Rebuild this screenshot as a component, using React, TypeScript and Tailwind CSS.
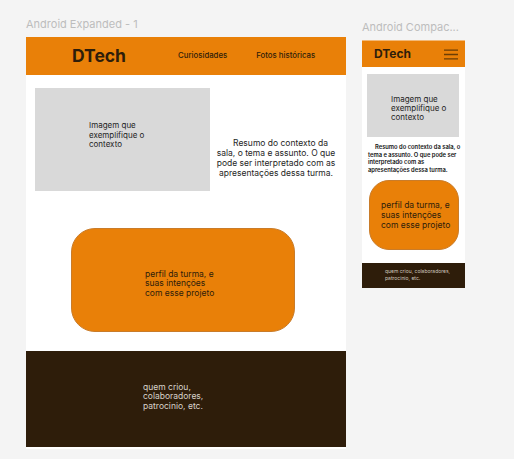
import React from 'react';

const font = { fontFamily: 'Inter, "Noto Sans", sans-serif' };

function ExpandedFrame() {
  return (
    <div className="flex flex-col">
      <p className="h-[12px] text-[11px] leading-[12px] text-[#bdbdbd] mb-[7px]">Android Expanded - 1</p>
      <div className="w-[320px] h-[412px] bg-white flex flex-col">
        <header className="h-[38px] bg-[#e98008] flex items-center pl-[46px] text-[#2e1d0a]">
          <h1 className="text-[17.5px] font-bold leading-none">DTech</h1>
          <span className="ml-[52px] text-[7.8px] font-medium">Curiosidades</span>
          <span className="ml-[29px] text-[7.8px] font-medium">Fotos históricas</span>
        </header>
        <div className="flex pt-[13px] pl-[9px]">
          <div className="w-[175px] h-[103px] bg-[#d9d9d9] pl-[54px] pt-[33px]">
            <p className="w-[64px] text-[8px] leading-[9.5px] text-[#1e1e1e]">Imagem que exemplifique o contexto</p>
          </div>
          <p className="w-[124px] ml-[4px] mt-[50px] indent-[9px] text-center whitespace-nowrap text-[8.5px] leading-[10px] text-[#1e1e1e]">
            Resumo do contexto da
            <br />
            sala, o tema e assunto. O que
            <br />
            pode ser interpretado com as
            <br />
            apresentações dessa turma.
          </p>
        </div>
        <div className="ml-[45px] mt-[37px] w-[224px] h-[104px] rounded-[24px] bg-[#e98008] border border-[#c97c2a] pl-[73px] pt-[41px]">
          <p className="w-[72px] text-[8.5px] leading-[9.3px] text-[#2e1d0a]">perfil da turma, e suas intenções com esse projeto</p>
        </div>
        <footer className="mt-[19px] h-[96px] bg-[#2e1d0a] pl-[117px] pt-[32px]">
          <p className="w-[70px] text-[8.5px] leading-[9.3px] text-[#d8d2ca]">quem criou, colaboradores, patrocinio, etc.</p>
        </footer>
      </div>
    </div>
  );
}

function CompactFrame() {
  return (
    <div className="flex flex-col mt-[3px]">
      <p className="h-[12px] text-[11px] leading-[12px] text-[#bdbdbd] mb-[7px]">Android Compac...</p>
      <div className="w-[103px] h-[248px] bg-white flex flex-col">
        <header className="h-[27px] bg-[#e98008] border-t border-[#f2b978] flex items-center justify-between pl-[12px] pr-[7px] text-[#2e1d0a]">
          <h1 className="text-[12px] font-bold leading-none">DTech</h1>
          <svg width="14" height="11" viewBox="0 0 14 11">
            <path d="M0 1.2H14M0 5.5H14M0 9.8H14" stroke="#6b3d05" strokeWidth="1.3" />
          </svg>
        </header>
        <div className="mt-[7px] ml-[5px] w-[92px] h-[63px] bg-[#d9d9d9] pl-[24px] pt-[21px]">
          <p className="w-[64px] text-[8px] leading-[9px] text-[#1e1e1e]">Imagem que exemplifique o contexto</p>
        </div>
        <p className="mt-[6px] ml-[6px] w-[97px] indent-[7px] text-[5.8px] font-semibold leading-[7.6px] text-[#111]">
          Resumo do contexto da sala, o tema e assunto. O que pode ser interpretado com as apresentações dessa turma.
        </p>
        <div className="mt-[7px] ml-[7px] w-[90px] h-[70px] rounded-[20px] bg-[#e98008] border border-[#c97c2a] flex items-center pl-[11px]">
          <p className="w-[72px] text-[8.5px] leading-[10px] text-[#2e1d0a]">perfil da turma, e suas intenções com esse projeto</p>
        </div>
        <footer className="mt-auto h-[25px] bg-[#2e1d0a] pl-[23px] pt-[5px]">
          <p className="w-[72px] text-[5px] leading-[7px] text-[#cfc8bf]">quem criou, colaboradores, patrocinio, etc.</p>
        </footer>
      </div>
    </div>
  );
}

export default function App() {
  return (
    <div className="w-[514px] h-[459px] bg-[#f4f4f4] flex items-start pl-[26px] pt-[18px]" style={font}>
      <ExpandedFrame />
      <div className="ml-[16px]">
        <CompactFrame />
      </div>
    </div>
  );
}
